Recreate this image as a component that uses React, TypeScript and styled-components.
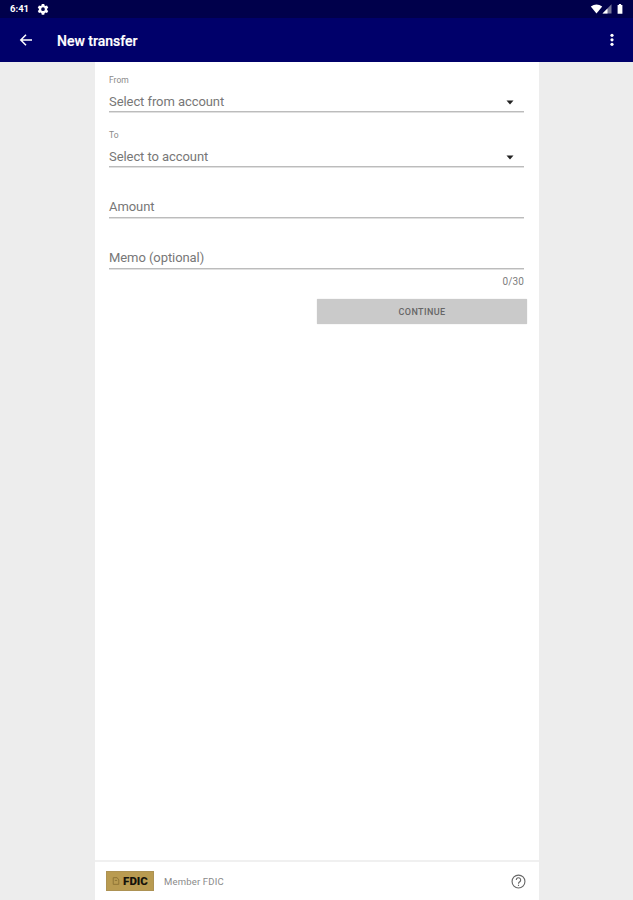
import React from "react";
import styled, { createGlobalStyle } from "styled-components";

const GlobalStyle = createGlobalStyle`
  * { box-sizing: border-box; }
  html, body { margin: 0; padding: 0; }
  body { background: #ededed; font-family: Roboto, "Liberation Sans", sans-serif; overflow: hidden; }
`;

const Screen = styled.div`
  display: flex;
  flex-direction: column;
  width: 633px;
  height: 900px;
  background: #ededed;
`;

const StatusBar = styled.header`
  display: flex;
  flex: none;
  align-items: center;
  height: 18px;
  padding: 0 9px 0 10px;
  background: #00004b;
  color: #fff;
`;

const Clock = styled.span`
  width: 27px;
  font-size: 9.5px;
  font-weight: 700;
  line-height: 18px;
`;

const StatusIcons = styled.div`
  display: flex;
  align-items: center;
  margin-left: auto;
`;

const AppBar = styled.nav`
  display: flex;
  flex: none;
  align-items: center;
  height: 44px;
  padding: 0 13px 0 18px;
  background: #00006a;
  color: #fff;
`;

const IconButton = styled.button`
  display: flex;
  padding: 0;
  border: 0;
  background: none;
  color: inherit;
`;

const Title = styled.h1`
  flex: 1;
  margin: 2px 0 0 23px;
  font-size: 14px;
  font-weight: 500;
  line-height: 20px;
  -webkit-text-stroke: 0.2px #fff;
`;

const Sheet = styled.main`
  display: flex;
  flex: 1;
  flex-direction: column;
  width: 444px;
  margin-left: 95px;
  background: #fff;
`;

const Form = styled.form`
  display: flex;
  flex: 1;
  flex-direction: column;
  padding: 12px 15px 0 14px;
`;

const Field = styled.div<{ $height: number }>`
  display: flex;
  flex-direction: column;
  justify-content: flex-end;
  height: ${(p) => p.$height}px;
  border-bottom: 1px solid #bcbcbc;
  box-shadow: 0 1px 0 #e0e0e0;
`;

const Label = styled.label`
  margin-bottom: 7px;
  color: #8a8a8a;
  font-size: 8.5px;
  line-height: 12px;
`;

const Control = styled.div`
  display: flex;
  align-items: center;
  justify-content: space-between;
  height: 18px;
  padding-right: 10px;
  color: #777;
  font-size: 13px;
  line-height: 18px;
  letter-spacing: -0.07px;
`;

const Counter = styled.div`
  margin-top: 6px;
  color: #7d7d7d;
  font-size: 10px;
  line-height: 14px;
  letter-spacing: 0.1px;
  text-align: right;
`;

const ContinueButton = styled.button`
  align-self: flex-end;
  width: 210px;
  height: 25px;
  margin: 10px -3px 0 0;
  padding: 1px 0 0;
  border: 0;
  border-radius: 1px;
  background: #cacaca;
  box-shadow: 0 0 1px #b5b5b5;
  color: #666;
  font: 500 9px/24px Roboto, "Liberation Sans", sans-serif;
  letter-spacing: 0.4px;
`;

const Footer = styled.footer`
  display: flex;
  align-items: center;
  height: 40px;
  padding: 0 13px 0 11px;
  border-top: 2px solid #f0f0f0;
  color: #686868;
`;

const Badge = styled.div`
  display: flex;
  align-items: center;
  justify-content: center;
  gap: 3px;
  width: 48px;
  height: 20px;
  border: 1px solid #ad9253;
  background: #b99b51;
  color: #15120a;
  font-size: 11.5px;
  font-weight: 900;
  line-height: 20px;
`;

const Member = styled.span`
  flex: 1;
  margin-left: 10px;
  color: #8a8a8a;
  font-size: 9.5px;
  letter-spacing: 0.18px;
`;

const Caret = () => (
  <svg width="8" height="5" viewBox="0 0 8 5" aria-hidden="true">
    <path d="M.5.5h7L4 4.4z" fill="#222" />
  </svg>
);

function SelectField({ label, value, height }: { label: string; value: string; height: number }) {
  return (
    <Field $height={height}>
      <Label>{label}</Label>
      <Control>
        {value}
        <Caret />
      </Control>
    </Field>
  );
}

const TextControl = styled(Control)`
  margin-bottom: 1px;
`;

function TextField({ placeholder, height }: { placeholder: string; height: number }) {
  return (
    <Field $height={height}>
      <TextControl>{placeholder}</TextControl>
    </Field>
  );
}

export default function App() {
  return (
    <Screen>
      <GlobalStyle />
      <StatusBar>
        <Clock>6:41</Clock>
        <svg width="12" height="12" viewBox="0 0 24 24" aria-hidden="true">
          <path
            fill="#fff"
            fillRule="evenodd"
            d="M9.5 2h5l.6 3 2 1.2 2.9-1 2.5 4.3-2.3 2v2.3l2.3 2-2.5 4.3-2.9-1-2 1.2-.6 3h-5l-.6-3-2-1.2-2.9 1L1.500 15.800l2.300-2v-2.300l-2.300-2L4 5.200l2.900 1 2-1.200zM12 8.700a3.700 3.700 0 1 0 0 7.400 3.700 3.700 0 0 0 0-7.400z"
          />
        </svg>
        <StatusIcons>
          <svg width="34" height="12" viewBox="0 0 34 12" aria-hidden="true">
            <path d="M.8 3.500Q6.500-.4 12.200 3.500L6.500 10.400z" fill="#fff" />
            <path d="M21.500 1.300v9.200h-9z" fill="#777799" />
            <path d="M17.500 5.600v4.900h-5z" fill="#fff" />
            <path d="M27.600 2h1.300V1h2.200v1h1.300v8.700h-4.800z" fill="#fff" />
          </svg>
        </StatusIcons>
      </StatusBar>
      <AppBar>
        <IconButton aria-label="Back">
          <svg width="16" height="16" viewBox="0 0 16 16" fill="none" stroke="currentColor" strokeWidth="1.5">
            <path d="M14 8H3M8 2.800 2.800 8 8 13.200" />
          </svg>
        </IconButton>
        <Title>New transfer</Title>
        <IconButton aria-label="More options">
          <svg width="16" height="16" viewBox="0 0 16 16" fill="currentColor">
            <circle cx="8" cy="3.300" r="1.600" />
            <circle cx="8" cy="7.800" r="1.600" />
            <circle cx="8" cy="12.300" r="1.600" />
          </svg>
        </IconButton>
      </AppBar>
      <Sheet>
        <Form>
          <SelectField label="From" value="Select from account" height={38} />
          <SelectField label="To" value="Select to account" height={55} />
          <TextField placeholder="Amount" height={51} />
          <TextField placeholder="Memo (optional)" height={51} />
          <Counter>0/30</Counter>
          <ContinueButton type="button">CONTINUE</ContinueButton>
        </Form>
        <Footer>
          <Badge>
            <svg width="8" height="10" viewBox="0 0 7 9" fill="none" stroke="#8b7134" aria-hidden="true">
              <path d="M1 1.500h3.500l1.500 2v4H1zM2.500 4h2" strokeWidth=".8" />
            </svg>
            FDIC
          </Badge>
          <Member>Member FDIC</Member>
          <svg width="15" height="15" viewBox="0 0 24 24" fill="none" stroke="currentColor" strokeWidth="1.800">
            <circle cx="12" cy="12" r="10.300" />
            <path d="M8.500 9.500a3.500 3.500 0 1 1 5.600 2.800c-1.300 1-2.100 1.500-2.100 3.200M12 17v2" />
          </svg>
        </Footer>
      </Sheet>
    </Screen>
  );
}
